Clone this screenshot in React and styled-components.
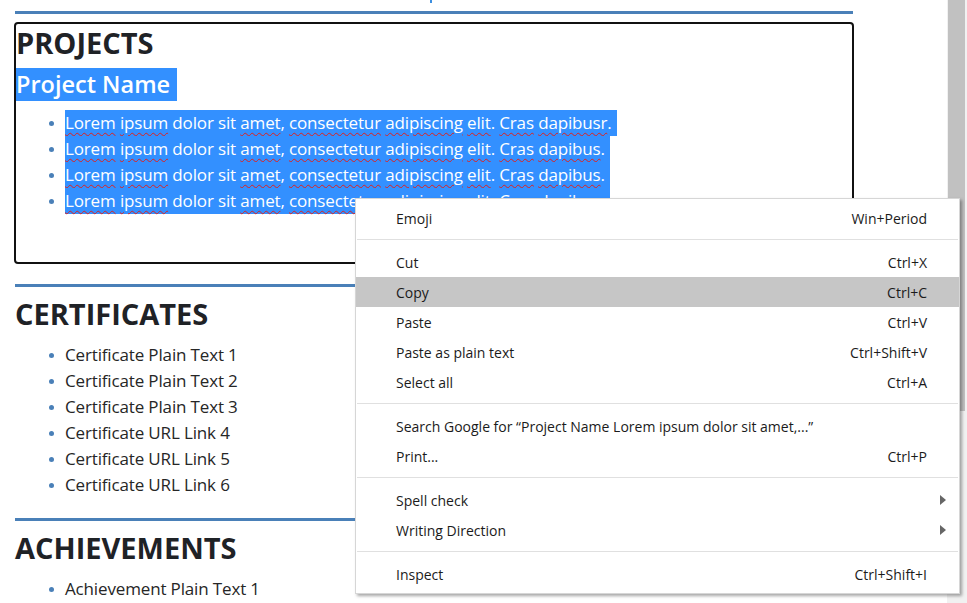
import React from "react";
import styled, { createGlobalStyle } from "styled-components";

const GlobalStyle = createGlobalStyle`
  html, body {
    margin: 0;
    padding: 0;
    background: #fff;
  }
  body {
    font-family: "Open Sans", "Noto Sans", sans-serif;
    color: #222;
    overflow: hidden;
  }
`;

const Page = styled.div`
  display: flex;
  width: 967px;
  height: 603px;
  overflow: hidden;
  position: relative;
`;

const Main = styled.div`
  flex: 1;
  padding-left: 15px;
`;

const Column = styled.div`
  width: 838px;
`;

const TopTail = styled.div`
  height: 11px;
  display: flex;
  padding-left: 415px;
`;

const Tick = styled.span`
  width: 2px;
  height: 3px;
  background: #3d8fe0;
`;

const Rule = styled.div`
  height: 3px;
  background: #4a80b8;
  margin-top: ${(p) => (p.first ? "0" : "20px")};
  margin-bottom: 8px;
`;

const Box = styled.div`
  border: 2px solid #111;
  border-radius: 4px;
  margin: 0 -1px;
  padding: 0 0 48px;
`;

const Heading = styled.h2`
  margin: 0;
  font-size: 29px;
  line-height: 38px;
  font-weight: 700;
  color: #1f2226;
`;

const ProjectName = styled.h3`
  margin: 6px 0 0;
  font-size: 23.5px;
  line-height: 33px;
  font-weight: 600;
  display: flex;
`;

const Selected = styled.span`
  background: #3390ff;
  color: #fff;
  padding-right: ${(p) => p.pad || 0}px;
`;

const List = styled.ul`
  margin: 9px 0 0;
  padding-left: ${(p) => (p.boxed ? 33 : 34)}px;
  list-style: none;
`;

const Item = styled.li`
  display: flex;
  align-items: center;
  font-size: 17px;
  letter-spacing: -0.15px;
  line-height: 26px;
  height: 26px;
  color: #262626;
  white-space: nowrap;
  &::before {
    content: "";
    width: 5px;
    height: 5px;
    border-radius: 50%;
    background: #4a80b8;
    margin-right: 11px;
    flex: none;
  }
`;

const Typo = styled.span`
  text-decoration: underline wavy #e0201c;
  text-decoration-thickness: 1px;
  text-underline-offset: 3px;
`;

const Scrollbar = styled.div`
  width: 20px;
  background: #f1f1f1;
  display: flex;
  flex-direction: column;
`;

const Thumb = styled.div`
  margin-left: 1px;
  width: 17px;
  height: 411px;
  background: #c1c1c1;
`;

const Menu = styled.div`
  position: absolute;
  left: 355px;
  top: 198px;
  width: 603px;
  background: #fff;
  border: 1px solid #d6d6d6;
  box-shadow: 2px 2px 3px rgba(0, 0, 0, 0.35);
  padding: 4px 0;
  font-family: "Open Sans", "Noto Sans", sans-serif;
  font-size: 14px;
  color: #1b1b1b;
  z-index: 5;
`;

const MenuRow = styled.div`
  display: flex;
  align-items: center;
  justify-content: space-between;
  height: 30px;
  padding: 0 32px 0 40px;
  background: ${(p) => (p.active ? "#c6c6c6" : "transparent")};
`;

const Shortcut = styled.span`
  color: #1b1b1b;
`;

const Arrow = styled.span`
  width: 0;
  height: 0;
  border-top: 5px solid transparent;
  border-bottom: 5px solid transparent;
  border-left: 6px solid #666;
  margin-right: -19px;
`;

const Separator = styled.div`
  height: 1px;
  background: #e0e0e0;
  margin: 6px 1px 7px;
`;

const lorem = (last) => (
  <Selected pad={5}>
    <Typo>Lorem</Typo> <Typo>ipsum</Typo> dolor sit <Typo>amet</Typo>, <Typo>consectetur</Typo>{" "}
    <Typo>adipiscing</Typo> <Typo>elit</Typo>. <Typo>Cras</Typo> <Typo>{last}</Typo>.
  </Selected>
);

const menu = [
  [{ label: "Emoji", key: "Win+Period" }],
  [
    { label: "Cut", key: "Ctrl+X" },
    { label: "Copy", key: "Ctrl+C", active: true },
    { label: "Paste", key: "Ctrl+V" },
    { label: "Paste as plain text", key: "Ctrl+Shift+V" },
    { label: "Select all", key: "Ctrl+A" },
  ],
  [
    { label: "Search Google for \u201cProject Name Lorem ipsum dolor sit amet,...\u201d" },
    { label: "Print...", key: "Ctrl+P" },
  ],
  [
    { label: "Spell check", sub: true },
    { label: "Writing Direction", sub: true },
  ],
  [{ label: "Inspect", key: "Ctrl+Shift+I" }],
];

const certificates = [
  "Certificate Plain Text 1",
  "Certificate Plain Text 2",
  "Certificate Plain Text 3",
  "Certificate URL Link 4",
  "Certificate URL Link 5",
  "Certificate URL Link 6",
];

const App = () => {
  return (
    <Page>
      <GlobalStyle />
      <Main>
        <Column>
          <TopTail>
            <Tick />
          </TopTail>
          <Rule first />
          <Box>
            <Heading>PROJECTS</Heading>
            <ProjectName>
              <Selected pad={7}>Project Name</Selected>
            </ProjectName>
            <List boxed>
              <Item>{lorem("dapibusr")}</Item>
              <Item>{lorem("dapibus")}</Item>
              <Item>{lorem("dapibus")}</Item>
              <Item>{lorem("dapibus")}</Item>
            </List>
          </Box>

          <Rule />
          <Heading>CERTIFICATES</Heading>
          <List>
            {certificates.map((c) => (
              <Item key={c}>{c}</Item>
            ))}
          </List>

          <Rule />
          <Heading>ACHIEVEMENTS</Heading>
          <List>
            <Item>Achievement Plain Text 1</Item>
          </List>
        </Column>
      </Main>
      <Scrollbar>
        <Thumb />
      </Scrollbar>

      <Menu>
        {menu.map((group, gi) => (
          <React.Fragment key={gi}>
            {gi > 0 && <Separator />}
            {group.map((it) => (
              <MenuRow key={it.label} active={it.active}>
                <span>{it.label}</span>
                {it.key && <Shortcut>{it.key}</Shortcut>}
                {it.sub && <Arrow />}
              </MenuRow>
            ))}
          </React.Fragment>
        ))}
      </Menu>
    </Page>
  );
};

export default App;
